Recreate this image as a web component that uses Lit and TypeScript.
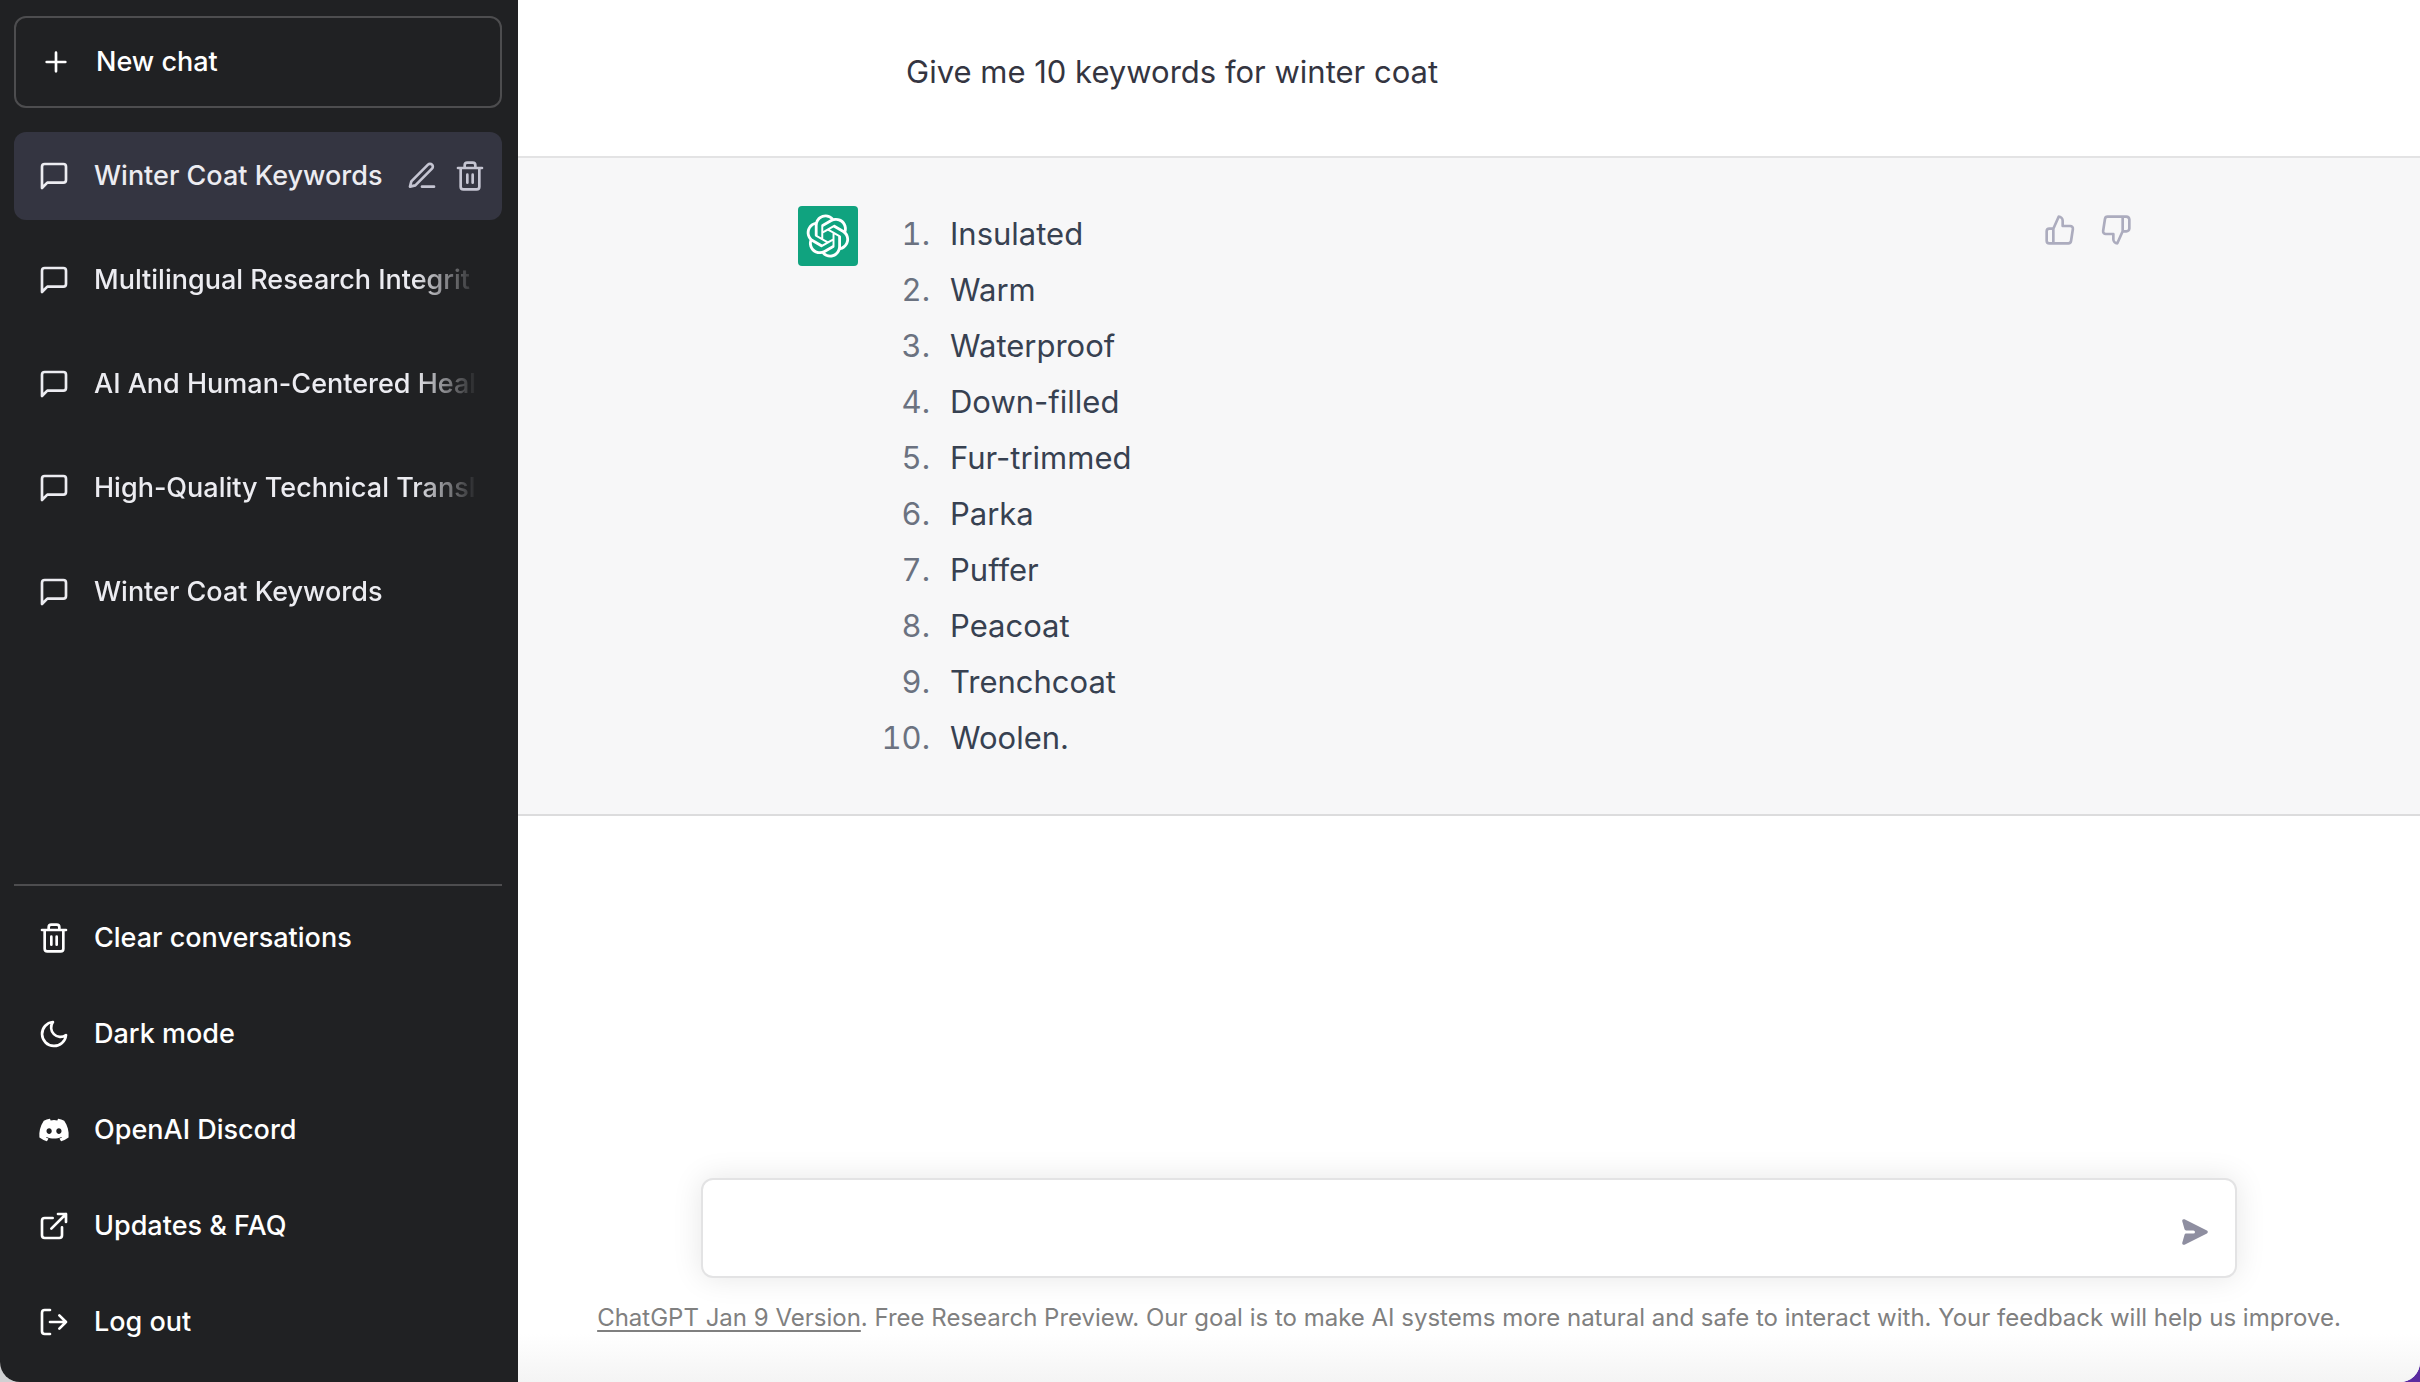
import { LitElement, html, svg, css } from "lit";
import { customElement, state } from "lit/decorators.js";

const stroked = (body: unknown) => html`<svg class="icon" viewBox="0 0 24 24" fill="none" stroke="currentColor" stroke-width="2" stroke-linecap="round" stroke-linejoin="round" aria-hidden="true">${body}</svg>`;

const plusIcon = stroked(svg`<path d="M12 5v14M5 12h14"/>`);
const chatIcon = stroked(svg`<path d="M21 15a2 2 0 0 1-2 2H7l-4 4V5a2 2 0 0 1 2-2h14a2 2 0 0 1 2 2z"/>`);
const editIcon = stroked(svg`<path d="M12 20h9"/><path d="M16.5 3.5a2.121 2.121 0 0 1 3 3L7 19l-4 1 1-4L16.5 3.5z"/>`);
const trashIcon = stroked(svg`<path d="M3 6h18M19 6v14a2 2 0 0 1-2 2H7a2 2 0 0 1-2-2V6m3 0V4a2 2 0 0 1 2-2h4a2 2 0 0 1 2 2v2M10 11v6M14 11v6"/>`);
const moonIcon = stroked(svg`<path d="M21 12.79A9 9 0 1 1 11.21 3 7 7 0 0 0 21 12.79z"/>`);
const linkIcon = stroked(svg`<path d="M18 13v6a2 2 0 0 1-2 2H5a2 2 0 0 1-2-2V8a2 2 0 0 1 2-2h6M15 3h6v6M10 14L21 3"/>`);
const logoutIcon = stroked(svg`<path d="M9 21H5a2 2 0 0 1-2-2V5a2 2 0 0 1 2-2h4M16 17l5-5-5-5M21 12H9"/>`);
const upIcon = stroked(svg`<path d="M14 9V5a3 3 0 0 0-3-3l-4 9v11h11.28a2 2 0 0 0 2-1.7l1.38-9a2 2 0 0 0-2-2.3zM7 22H4a2 2 0 0 1-2-2v-7a2 2 0 0 1 2-2h3"/>`);
const downIcon = stroked(svg`<path d="M10 15v4a3 3 0 0 0 3 3l4-9V2H5.72a2 2 0 0 0-2 1.7l-1.38 9a2 2 0 0 0 2 2.3zm7-13h2.67A2.31 2.31 0 0 1 22 4v7a2.31 2.31 0 0 1-2.33 2H17"/>`);

const discordIcon = html`<svg class="icon" viewBox="0 0 640 512" fill="currentColor" aria-hidden="true"><path d="M524.531,69.836a1.5,1.5,0,0,0-.764-.7A485.065,485.065,0,0,0,404.081,32.03a1.816,1.816,0,0,0-1.923.91,337.461,337.461,0,0,0-14.9,30.6,447.848,447.848,0,0,0-134.426,0,309.541,309.541,0,0,0-15.135-30.6,1.89,1.89,0,0,0-1.924-.91A483.689,483.689,0,0,0,116.085,69.137a1.712,1.712,0,0,0-.788.676C39.068,183.651,18.186,294.69,28.43,404.354a2.016,2.016,0,0,0,.765,1.375A487.666,487.666,0,0,0,176.02,479.918a1.9,1.9,0,0,0,2.063-.676A348.2,348.2,0,0,0,208.12,430.4a1.86,1.86,0,0,0-1.019-2.588,321.173,321.173,0,0,1-45.868-21.853,1.885,1.885,0,0,1-.185-3.126c3.082-2.309,6.166-4.711,9.109-7.137a1.819,1.819,0,0,1,1.9-.256c96.229,43.917,200.41,43.917,295.5,0a1.812,1.812,0,0,1,1.924.233c2.944,2.426,6.027,4.851,9.132,7.16a1.884,1.884,0,0,1-.162,3.126,301.407,301.407,0,0,1-45.89,21.83,1.875,1.875,0,0,0-1,2.611,391.055,391.055,0,0,0,30.014,48.815,1.864,1.864,0,0,0,2.063.7A486.048,486.048,0,0,0,610.7,405.729a1.882,1.882,0,0,0,.765-1.352C623.729,277.594,590.933,167.465,524.531,69.836ZM222.491,337.58c-28.972,0-52.844-26.587-52.844-59.239S193.056,219.1,222.491,219.1c29.665,0,53.306,26.82,52.843,59.239C275.334,310.993,251.924,337.58,222.491,337.58Zm195.38,0c-28.971,0-52.843-26.587-52.843-59.239S388.437,219.1,417.871,219.1c29.667,0,53.307,26.82,52.844,59.239C470.715,310.993,447.538,337.58,417.871,337.58Z"/></svg>`;

const sendIcon = html`<svg class="icon" viewBox="0 0 20 20" fill="currentColor" aria-hidden="true"><path transform="rotate(90 10 10)" d="M10.894 2.553a1 1 0 00-1.788 0l-7 14a1 1 0 001.169 1.409l5-1.429A1 1 0 009 15.571V11a1 1 0 112 0v4.571a1 1 0 00.725.962l5 1.428a1 1 0 001.17-1.408l-7-14z"/></svg>`;

const logo = html`<svg class="logo" viewBox="0 0 41 41" fill="currentColor" aria-hidden="true"><path d="M37.5324 16.8707C37.9808 15.5241 38.1363 14.0974 37.9886 12.6859C37.8409 11.2744 37.3934 9.91076 36.676 8.68622C35.6126 6.83404 33.9882 5.3676 32.0373 4.4985C30.0864 3.62941 27.9098 3.40259 25.8215 3.85078C24.8796 2.7893 23.7219 1.94125 22.4257 1.36341C21.1295 0.785575 19.7249 0.491269 18.3058 0.500197C16.1708 0.495044 14.0893 1.16803 12.3614 2.42214C10.6335 3.67624 9.34853 5.44666 8.6917 7.47815C7.30085 7.76286 5.98686 8.3414 4.8377 9.17505C3.68854 10.0087 2.73073 11.0782 2.02839 12.312C0.956464 14.1591 0.498905 16.2988 0.721698 18.4228C0.944492 20.5467 1.83612 22.5449 3.268 24.1293C2.81966 25.4759 2.66413 26.9026 2.81182 28.3141C2.95951 29.7256 3.40701 31.0892 4.12437 32.3138C5.18791 34.1659 6.8123 35.6322 8.76321 36.5013C10.7141 37.3704 12.8907 37.5973 14.9789 37.1492C15.9208 38.2107 17.0786 39.0587 18.3747 39.6366C19.6709 40.2144 21.0755 40.5087 22.4946 40.4998C24.6307 40.5054 26.7133 39.8321 28.4418 38.5772C30.1704 37.3223 31.4556 35.5506 32.1119 33.5179C33.5027 33.2332 34.8167 32.6547 35.9659 31.821C37.115 30.9874 38.0728 29.9178 38.7752 28.684C39.8458 26.8371 40.3023 24.6979 40.0789 22.5748C39.8556 20.4517 38.9639 18.4544 37.5324 16.8707ZM22.4978 37.8849C20.7443 37.8874 19.0459 37.2733 17.6994 36.1501C17.7601 36.117 17.8666 36.0586 17.936 36.0161L25.9004 31.4156C26.1003 31.3019 26.2663 31.137 26.3813 30.9378C26.4964 30.7386 26.5563 30.5124 26.5549 30.2825V19.0542L29.9213 20.998C29.9389 21.0068 29.9541 21.0198 29.9656 21.0359C29.977 21.052 29.9842 21.0707 29.9867 21.0902V30.3889C29.9842 32.375 29.1946 34.2791 27.7909 35.6841C26.3872 37.0892 24.4838 37.8806 22.4978 37.8849ZM6.39227 31.0064C5.51397 29.4888 5.19742 27.7107 5.49804 25.9832C5.55718 26.0187 5.66048 26.0818 5.73461 26.1244L13.699 30.7248C13.8975 30.8408 14.1233 30.902 14.3532 30.902C14.583 30.902 14.8088 30.8408 15.0073 30.7248L24.731 25.1103V28.9979C24.7321 29.0177 24.7283 29.0376 24.7199 29.0556C24.7115 29.0736 24.6988 29.0893 24.6829 29.1012L16.6317 33.7497C14.9096 34.7416 12.8643 35.0097 10.9447 34.4954C9.02506 33.9811 7.38785 32.7263 6.39227 31.0064ZM4.29707 13.6194C5.17156 12.0998 6.55279 10.9364 8.19885 10.3327C8.19885 10.4013 8.19491 10.5228 8.19491 10.6071V19.808C8.19351 20.0378 8.25334 20.2638 8.36823 20.4629C8.48312 20.6619 8.64893 20.8267 8.84863 20.9404L18.5723 26.5542L15.206 28.4979C15.1894 28.5089 15.1703 28.5155 15.1505 28.5173C15.1307 28.5191 15.1107 28.516 15.0924 28.5082L7.04046 23.8557C5.32135 22.8601 4.06716 21.2235 3.55289 19.3046C3.03862 17.3858 3.30624 15.3413 4.29707 13.6194ZM31.955 20.0556L22.2312 14.4411L25.5976 12.4981C25.6142 12.4872 25.6333 12.4805 25.6531 12.4787C25.6729 12.4769 25.6928 12.4801 25.7111 12.4879L33.7631 17.1364C34.9967 17.849 36.0017 18.8982 36.6606 20.1613C37.3194 21.4244 37.6047 22.849 37.4832 24.2684C37.3617 25.6878 36.8382 27.0432 35.9743 28.1759C35.1103 29.3086 33.9415 30.1717 32.6047 30.6641C32.6047 30.5947 32.6047 30.4733 32.6047 30.3889V21.188C32.6066 20.9586 32.5474 20.7328 32.4332 20.5338C32.319 20.3348 32.154 20.1698 31.955 20.0556ZM35.3055 15.0128C35.2464 14.9765 35.1431 14.9142 35.069 14.8717L27.1045 10.2712C26.906 10.1554 26.6803 10.0943 26.4504 10.0943C26.2206 10.0943 25.9948 10.1554 25.7963 10.2712L16.0726 15.8858V11.9982C16.0715 11.9783 16.0753 11.9585 16.0837 11.9405C16.0921 11.9225 16.1048 11.9068 16.1207 11.8949L24.1719 7.25025C25.4053 6.53903 26.8158 6.19376 28.2383 6.25482C29.6608 6.31589 31.0364 6.78077 32.2044 7.59508C33.3723 8.40939 34.2842 9.53945 34.8334 10.8531C35.3826 12.1667 35.5464 13.6095 35.3055 15.0128ZM14.2424 21.9419L10.8752 19.9981C10.8576 19.9893 10.8423 19.9763 10.8309 19.9602C10.8195 19.9441 10.8122 19.9254 10.8098 19.9058V10.6071C10.8107 9.18295 11.2173 7.78848 11.9819 6.58696C12.7466 5.38544 13.8377 4.42659 15.1275 3.82264C16.4173 3.21869 17.8524 2.99464 19.2649 3.1767C20.6775 3.35876 22.0089 3.93941 23.1034 4.85067C23.0427 4.88379 22.937 4.94215 22.8668 4.98473L14.9024 9.58517C14.7025 9.69878 14.5366 9.86356 14.4215 10.0626C14.3065 10.2616 14.2466 10.4877 14.2479 10.7175L14.2424 21.9419ZM16.071 17.9991L20.4018 15.4978L24.7325 17.9975V22.9985L20.4018 25.4983L16.071 22.9985V17.9991Z"/></svg>`;

const base = css`
  :host, * { box-sizing: border-box; }
  button { font: inherit; color: inherit; background: none; border: 0; padding: 0; margin: 0; text-align: left; cursor: pointer; }
  a { color: inherit; }
  .icon { display: block; width: 32px; height: 32px; flex: none; }
`;

@customElement("chat-sidebar")
export class ChatSidebar extends LitElement {
  @state() private active = 0;

  private chats = [
    "Winter Coat Keywords",
    "Multilingual Research Integrit",
    "AI And Human-Centered Heal",
    "High-Quality Technical Transl",
    "Winter Coat Keywords",
  ];

  static styles = [base, css`
    :host { display: flex; flex-direction: column; flex: none; width: 518px; padding: 16px 16px 16px 14px; background: #202123; color: #fff; font-size: 27px; font-weight: 450; line-height: 40px; }
    .row { display: flex; align-items: center; gap: 24px; width: 100%; padding: 24px; border-radius: 12px; text-decoration: none; }
    .new { border: 2px solid #4d4d4f; margin-bottom: 24px; }
    .chats { display: flex; flex-direction: column; gap: 16px; flex: 1; margin: 0; padding: 0; list-style: none; color: #ececf1; }
    .chat { display: flex; align-items: center; border-radius: 12px; }
    .chat.active { background: #343541; padding-right: 16px; }
    .chat .row { flex: 1; min-width: 0; }
    .chat.active .row { padding-right: 0; }
    .title { flex: 1; min-width: 0; overflow: hidden; white-space: nowrap; }
    .fade { -webkit-mask-image: linear-gradient(to left, transparent, #000 64px); mask-image: linear-gradient(to left, transparent, #000 64px); }
    .tools { display: flex; gap: 16px; color: #c5c5d2; }
    .menu { display: flex; flex-direction: column; gap: 8px; padding-top: 8px; border-top: 2px solid #4d4d4f; }
  `];

  render() {
    return html`
      <button class="row new">${plusIcon}<span>New chat</span></button>
      <ul class="chats">
        ${this.chats.map((name, i) => html`
          <li class="chat ${i === this.active ? "active" : ""}">
            <button class="row" @click=${() => { this.active = i; }}>
              ${chatIcon}<span class="title ${i === this.active ? "" : "fade"}">${name}</span>
            </button>
            ${i === this.active ? html`<div class="tools">
              <button aria-label="Rename">${editIcon}</button>
              <button aria-label="Delete">${trashIcon}</button>
            </div>` : null}
          </li>`)}
      </ul>
      <nav class="menu">
        <button class="row">${trashIcon}<span>Clear conversations</span></button>
        <button class="row">${moonIcon}<span>Dark mode</span></button>
        <a class="row" href="#discord">${discordIcon}<span>OpenAI Discord</span></a>
        <a class="row" href="#faq">${linkIcon}<span>Updates &amp; FAQ</span></a>
        <button class="row">${logoutIcon}<span>Log out</span></button>
      </nav>
    `;
  }
}

@customElement("chat-thread")
export class ChatThread extends LitElement {
  private words = ["Insulated", "Warm", "Waterproof", "Down-filled", "Fur-trimmed", "Parka", "Puffer", "Peacoat", "Trenchcoat", "Woolen."];

  static styles = [base, css`
    :host { display: block; flex: 1; font-size: 31px; line-height: 56px; }
    .message { padding: 48px; border-bottom: 2px solid #dcdcdd; color: #374151; background: #f7f7f8; }
    .message.user { padding-top: 44px; padding-bottom: 56px; border-color: #e3e3e4; color: #343541; background: #fff; }
    .inner { display: flex; align-items: flex-start; gap: 48px; max-width: 1342px; margin: 0 auto; }
    .user .inner { padding-left: 108px; }
    p { margin: 0; }
    .avatar { display: grid; place-items: center; flex: none; width: 60px; height: 60px; border-radius: 4px; background: #10a37f; color: #fff; }
    .logo { width: 44px; height: 44px; }
    ol { flex: 1; margin: 0; padding: 0; list-style: none; }
    li { display: flex; gap: 20px; }
    .num { width: 48px; margin-left: -24px; color: #6b7280; white-space: nowrap; display: flex; justify-content: flex-end; font-variant-numeric: tabular-nums; }
    .votes { display: flex; gap: 8px; color: #acacbe; }
    .votes button { padding: 8px; }
  `];

  render() {
    return html`
      <section class="message user"><div class="inner"><p>Give me 10 keywords for winter coat</p></div></section>
      <section class="message">
        <div class="inner">
          <div class="avatar">${logo}</div>
          <ol>${this.words.map((word, i) => html`<li><span class="num">${i + 1}.</span><span>${word}</span></li>`)}</ol>
          <div class="votes">
            <button aria-label="Good response">${upIcon}</button>
            <button aria-label="Bad response">${downIcon}</button>
          </div>
        </div>
      </section>
    `;
  }
}

@customElement("chat-composer")
export class ChatComposer extends LitElement {
  static styles = [base, css`
    :host { display: block; padding: 0 48px 44px; background: linear-gradient(to top, #f4f4f4, #fff 48px); }
    form { display: flex; align-items: flex-end; max-width: 1536px; margin: 0 auto 20px; padding: 28px 16px 20px 32px; border: 2px solid #e3e3e4; border-radius: 12px; background: #fff; box-shadow: 0 0 30px rgba(0, 0, 0, 0.1); }
    textarea { flex: 1; height: 48px; padding: 0; border: 0; outline: 0; resize: none; background: transparent; color: #343541; font: inherit; font-size: 31px; line-height: 48px; }
    form button { padding: 8px; color: #8e8ea0; }
    p { margin: 0; text-align: center; white-space: nowrap; font-size: 24px; line-height: 40px; color: #808080; }
    a { text-decoration-thickness: 2px; text-underline-offset: 4px; text-decoration-skip-ink: none; }
  `];

  render() {
    return html`
      <form @submit=${(e: Event) => e.preventDefault()}>
        <textarea aria-label="Message"></textarea>
        <button aria-label="Send message">${sendIcon}</button>
      </form>
      <p><a href="#notes">ChatGPT Jan 9 Version</a>. Free Research Preview. Our goal is to make AI systems more natural and safe to interact with. Your feedback will help us improve.</p>
    `;
  }
}

@customElement("app-root")
export class AppRoot extends LitElement {
  static styles = css`
    :host { display: block; min-height: 100vh; background: linear-gradient(to right, #d0d0d2 24px, #4a2a4c 25px, #5a2ca0); font-family: Inter, "Liberation Sans", sans-serif; }
    .window { display: flex; min-height: 100vh; overflow: hidden; border-radius: 0 0 20px 20px; background: #fff; }
    main { display: flex; flex-direction: column; flex: 1; min-width: 0; }
  `;

  render() {
    return html`
      <div class="window">
        <chat-sidebar></chat-sidebar>
        <main>
          <chat-thread></chat-thread>
          <chat-composer></chat-composer>
        </main>
      </div>
    `;
  }
}
